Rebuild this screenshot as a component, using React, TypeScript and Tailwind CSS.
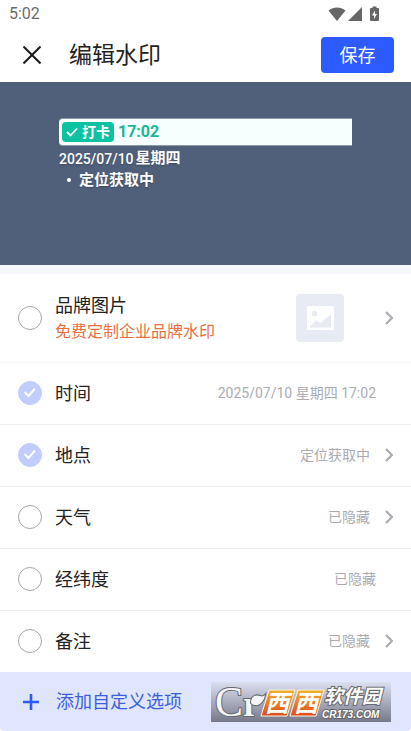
import React from "react";

type Option = {
  id: string;
  label: string;
  value: string;
  checked?: boolean;
  link?: boolean;
};

const options: Option[] = [
  { id: "time", label: "时间", value: "2025/07/10 星期四 17:02", checked: true },
  { id: "place", label: "地点", value: "定位获取中", checked: true, link: true },
  { id: "weather", label: "天气", value: "已隐藏", link: true },
  { id: "coords", label: "经纬度", value: "已隐藏" },
  { id: "note", label: "备注", value: "已隐藏", link: true },
];

function Chevron() {
  return (
    <svg className="h-4 w-2" viewBox="0 0 8 16" fill="none" stroke="#a9abb1" strokeWidth="2.2">
      <path d="M1 2l6 6-6 6" />
    </svg>
  );
}

function Tick({ id, checked }: { id: string; checked?: boolean }) {
  return (
    <span className="relative h-6 w-6 shrink-0">
      <input
        id={id}
        type="checkbox"
        defaultChecked={checked}
        className="peer block h-6 w-6 appearance-none rounded-full border border-[#a5a7ae] bg-white checked:border-[#c2cdff] checked:bg-[#c2cdff]"
      />
      <svg
        className="pointer-events-none absolute inset-0 hidden h-6 w-6 peer-checked:block"
        viewBox="0 0 24 24"
        fill="none"
        stroke="white"
        strokeWidth="2"
      >
        <path d="M6.500 11l4 4 6.500-7.500" />
      </svg>
    </span>
  );
}

function StatusBar() {
  return (
    <div className="flex h-7 items-center justify-between pl-[9px] pr-8 text-[#6b6b6b]">
      <span className="text-base">5:02</span>
      <div className="flex items-center gap-0.5">
        <svg className="h-4 w-[18px]" viewBox="0 0 18 16" fill="#666">
          <path d="M0.500 4.500C5.500 0.500 12.500 0.500 17.500 4.500L9 15z" />
        </svg>
        <svg className="h-4 w-[14px]" viewBox="0 0 14 16" fill="#666">
          <path d="M0 15L14 1v14z" />
        </svg>
        <svg className="ml-1.5 h-4 w-[9px]" viewBox="0 0 9 16" fill="#666">
          <path d="M2.500 0.500h4V2H8a1 1 0 0 1 1 1v11a1 1 0 0 1-1 1H1a1 1 0 0 1-1-1V3a1 1 0 0 1 1-1h1.500z" />
          <path d="M5 4.500L2 9.500h2v3.500l3-5H5z" fill="white" />
        </svg>
      </div>
    </div>
  );
}

function Preview() {
  return (
    <section className="h-[183px] bg-[#50607a] px-[59px] pt-9 text-white">
      <div className="flex h-7 items-center gap-1 rounded-l border-y border-[#8d99a8] bg-[#f6fffe] pl-[3px]">
        <span className="flex h-5 items-center gap-1 rounded-sm bg-[#0cc2a2] px-1 text-sm font-bold">
          <svg className="h-3 w-3" viewBox="0 0 12 12" fill="none" stroke="white" strokeWidth="1.800">
            <path d="M1 6l3.500 3.500L11 2.500" />
          </svg>
          打卡
        </span>
        <span className="text-base font-bold text-[#18b795]">17:02</span>
      </div>
      <div className="flex h-6 items-center gap-0.5 pt-px text-shadow-sm">
        <span className="text-sm font-medium">2025/07/10</span>
        <span className="text-[15px] font-bold">星期四</span>
      </div>
      <div className="flex h-5 items-center gap-2 pl-2 text-[15px] font-bold text-shadow-sm">
        <span className="h-1 w-1 rounded-full bg-white" />
        <span>定位获取中</span>
      </div>
    </section>
  );
}

function SiteLogo() {
  return (
    <svg className="h-10 w-[180px] shrink-0 overflow-visible" viewBox="0 0 180 40">
      <defs>
        <linearGradient id="plate" x1="0" y1="0" x2="0" y2="1">
          <stop offset="0" stopColor="#dcdff0" />
          <stop offset="1" stopColor="#77798a" />
        </linearGradient>
        <linearGradient id="orange" x1="0" y1="0" x2="0" y2="1">
          <stop offset="0" stopColor="#f5b22d" />
          <stop offset="1" stopColor="#df4a1c" />
        </linearGradient>
      </defs>
      <path d="M0 0h180v40H0z" fill="url(#plate)" />
      <g fill="#f4f5f7" stroke="#66676c" strokeWidth="2" style={{ paintOrder: "stroke" }} fontFamily="Liberation Serif, serif">
        <text x="4" y="34" fontSize="42">C</text>
        <text x="32" y="34" fontSize="36" fontWeight="bold">r</text>
        <path d="M40 21c0-6 4-9 9-7 2 1 4 0 5-1-1 6-5 11-10 10-2 0-3-1-4-2z" />
      </g>
      <g fill="url(#orange)" stroke="#fff3e4" strokeWidth="1">
        <path d="M58 8h26l-8 26H50z" />
        <path d="M87 8h26l-8 26H79z" />
      </g>
      <g fill="white" fontFamily="Noto Sans CJK SC, sans-serif" fontWeight="bold" fontStyle="italic" fontSize="24">
        <text x="54" y="30">西</text>
        <text x="83" y="30">西</text>
      </g>
      <g fill="white" stroke="#66676c" strokeWidth="2" fontWeight="bold" fontStyle="italic" style={{ paintOrder: "stroke" }}>
        <text x="113" y="21" fontFamily="Noto Sans CJK SC, sans-serif" fontSize="19">软件园</text>
        <text x="111" y="36" fontFamily="Liberation Sans, sans-serif" fontSize="10">CR173.COM</text>
      </g>
    </svg>
  );
}

export default function App() {
  return (
    <main className="flex min-h-screen flex-col bg-white font-[Roboto,'Noto_Sans_CJK_SC',sans-serif] text-[#222]">
      <StatusBar />
      <header className="flex h-[54px] items-center pl-[23px] pr-[17px]">
        <button aria-label="关闭">
          <svg className="h-[18px] w-[18px]" viewBox="0 0 18 18" fill="none" stroke="#181818" strokeWidth="2">
            <path d="M0.500 0.500l17 17M17.500 0.500l-17 17" />
          </svg>
        </button>
        <h1 className="flex-1 pl-7 pt-0.5 text-[23px]">编辑水印</h1>
        <button className="h-9 w-[73px] rounded bg-[#2e5bff] pt-0.5 text-lg text-white">保存</button>
      </header>

      <Preview />
      <div className="h-[9px] bg-[#f5f7fc]" />

      {/* Brand picture */}
      <div className="flex h-[89px] items-center border-b border-[#f6f6f6] px-[18px]">
        <Tick id="brand" />
        <label htmlFor="brand" className="flex-1 pl-[13px]">
          <span className="block text-lg leading-7">品牌图片</span>
          <span className="block text-base text-[#e8703f]">免费定制企业品牌水印</span>
        </label>
        <button className="flex items-center gap-[41px]" aria-label="品牌图片">
          <span className="flex h-12 w-12 items-center justify-center rounded bg-[#e8ebf3]">
            <svg className="h-6 w-[27px]" viewBox="0 0 27 24">
              <rect width="27" height="24" rx="1.500" fill="white" />
              <circle cx="7.500" cy="7.500" r="2.700" fill="#e8ebf3" />
              <path d="M3 21.500v-1l6-6.500 4.500 3L24 8v13.500z" fill="#e8ebf3" />
            </svg>
          </span>
          <Chevron />
        </button>
      </div>

      {options.map((option) => (
        <div key={option.id} className="flex h-[62px] items-center border-b border-[#ececee] px-[18px] pb-px last-of-type:h-[61px] last-of-type:border-0">
          <Tick id={option.id} checked={option.checked} />
          <label htmlFor={option.id} className="flex-1 pl-[13px] pt-0.5 text-lg">
            {option.label}
          </label>
          {option.link ? (
            <button className="flex items-center gap-[15px] text-sm text-[#aaacb2]">
              {option.value}
              <Chevron />
            </button>
          ) : (
            <span className="pr-[17px] text-sm text-[#aaacb2]">{option.value}</span>
          )}
        </div>
      ))}

      <footer className="flex min-h-[59px] flex-1 items-center justify-between rounded-b bg-[#e0e6fd] pl-[23px] pr-5">
        <button className="flex items-center gap-[17px] text-lg text-[#3b5fe0]">
          <svg className="h-4 w-4" viewBox="0 0 16 16" fill="none" stroke="#2e5bff" strokeWidth="2.600">
            <path d="M8 0v16M0 8h16" />
          </svg>
          添加自定义选项
        </button>
        <SiteLogo />
      </footer>
    </main>
  );
}
